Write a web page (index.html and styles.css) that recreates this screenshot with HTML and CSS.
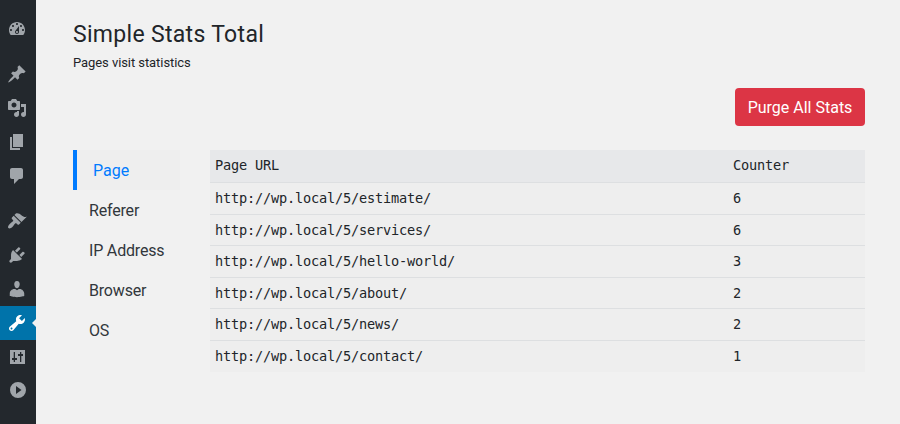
FILE: index.html
```html
<!DOCTYPE html>
<html lang="en">
<head>
<meta charset="utf-8">
<title>Simple Stats Total</title>
<link rel="stylesheet" href="styles.css">
</head>
<body>
<nav class="menu">
  <a class="item"><svg viewBox="0 0 20 20"><path d="M3.76 16h12.48c1.1-1.37 1.76-3.11 1.76-5 0-4.42-3.58-8-8-8s-8 3.58-8 8c0 1.89.66 3.63 1.76 5zM10 4c.55 0 1 .45 1 1s-.45 1-1 1-1-.45-1-1 .45-1 1-1zM6 6c.55 0 1 .45 1 1s-.45 1-1 1-1-.45-1-1 .45-1 1-1zm8 0c.55 0 1 .45 1 1s-.45 1-1 1-1-.45-1-1 .45-1 1-1zm-5.37 5.55L12 7v6c0 1.1-.9 2-2 2s-2-.9-2-2c0-.57.24-1.08.63-1.45zM4 10c.55 0 1 .45 1 1s-.45 1-1 1-1-.45-1-1 .45-1 1-1zm12 0c.55 0 1 .45 1 1s-.45 1-1 1-1-.45-1-1 .45-1 1-1zm-5 3c0-.55-.45-1-1-1s-1 .45-1 1 .45 1 1 1 1-.45 1-1z"/></svg></a>
  <a class="item group"><svg viewBox="0 0 20 20"><path d="M10.44 3.02l1.82-1.82 6.36 6.35-1.83 1.82c-1.05-.68-2.48-.57-3.41.36l-.75.75c-.92.93-1.04 2.35-.35 3.41l-1.83 1.82-2.41-2.41-2.8 2.79c-.42.42-3.38 2.71-3.8 2.29s1.86-3.39 2.28-3.81l2.79-2.79L4.1 9.36l1.83-1.82c1.05.69 2.48.57 3.4-.36l.75-.75c.93-.92 1.05-2.35.36-3.41z"/></svg></a>
  <a class="item"><svg viewBox="0 0 20 20"><path d="M13 11V4c0-.55-.45-1-1-1h-1.67L9 1H5L3.67 3H2c-.55 0-1 .45-1 1v7c0 .55.45 1 1 1h10c.55 0 1-.45 1-1zM7 4.5c1.38 0 2.5 1.12 2.5 2.5S8.38 9.5 7 9.5 4.5 8.38 4.5 7 5.62 4.5 7 4.5zM14 6h5v10.5c0 1.38-1.12 2.5-2.5 2.5S14 17.88 14 16.5s1.12-2.5 2.5-2.5c.17 0 .34.02.5.05V9h-3V6zm-4 8.05V13h2v3.5c0 1.38-1.12 2.5-2.5 2.5S7 17.88 7 16.5 8.12 14 9.5 14c.17 0 .34.02.5.05z"/></svg></a>
  <a class="item"><svg viewBox="0 0 20 20"><path d="M6 15V2h10v13H6zm-1 1h8v2H3V5h2v11z"/></svg></a>
  <a class="item"><svg viewBox="0 0 20 20"><path d="M5 2h9c1.1 0 2 .9 2 2v7c0 1.1-.9 2-2 2h-2l-5 5v-5H5c-1.1 0-2-.9-2-2V4c0-1.1.9-2 2-2z"/></svg></a>
  <a class="item group"><svg viewBox="0 0 20 20"><path d="M14.48 11.06L7.41 3.99l1.5-1.5c.5-.56 2.3-.47 3.51.32 1.21.8 1.43 1.28 2.91 2.1 1.18.64 2.45 1.26 4.45.85zm-.71.71L6.7 4.7 4.93 6.47c-.39.39-.39 1.02 0 1.41l1.06 1.06c.39.39.39 1.03 0 1.42-.6.6-1.43 1.11-2.21 1.69-.35.26-.7.53-1.01.84C1.43 14.23.4 16.08 1.4 17.07c.99 1 2.84-.03 4.18-1.36.31-.31.58-.66.85-1.02.57-.78 1.08-1.61 1.69-2.21.39-.39 1.02-.39 1.41 0l1.06 1.06c.39.39 1.02.39 1.41 0z"/></svg></a>
  <a class="item"><svg viewBox="0 0 20 20"><path d="M13.11 4.36L9.87 7.6 8 5.73l3.24-3.24c.35-.34 1.05-.2 1.56.32.52.51.66 1.21.31 1.55zm-8 1.77l.91-1.12 9.01 9.01-1.19.84c-.71.71-2.63 1.16-3.82 1.16H6.14L4.9 17.26c-.59.59-1.54.59-2.12 0-.59-.58-.59-1.53 0-2.12l1.24-1.24v-3.88c0-1.13.4-3.19 1.09-3.89zm7.26 3.97l3.24-3.24c.34-.35 1.04-.21 1.55.31.52.51.66 1.21.31 1.55l-3.24 3.25z"/></svg></a>
  <a class="item"><svg viewBox="0 0 20 20"><path d="M10 9.25c-2.27 0-2.73-3.44-2.73-3.44C7 4.02 7.82 2 9.97 2c2.16 0 2.98 2.02 2.71 3.81 0 0-.41 3.44-2.68 3.44zm0 1.9l1.800-1.150h.920c2.400 0 4.520 2.330 4.520 4.530v2.490s-3.650 1.130-7.240 1.130c-3.650 0-7.240-1.130-7.240-1.130v-2.490c0-2.250 1.940-4.480 4.470-4.480h1z"/></svg></a>
  <a class="item current"><svg viewBox="0 0 20 20"><path d="M16.68 9.77c-1.34 1.34-3.3 1.67-4.95.99l-5.41 6.52c-.99.99-2.59.99-3.58 0s-.99-2.59 0-3.57l6.52-5.42c-.68-1.65-.35-3.61.99-4.95 1.28-1.28 3.12-1.62 4.72-1.06l-2.89 2.89 2.82 2.82 2.86-2.87c.53 1.58.18 3.39-1.08 4.65zM3.81 16.21c.4.39 1.04.39 1.43 0 .4-.4.4-1.04 0-1.43-.39-.4-1.03-.4-1.43 0-.39.39-.39 1.03 0 1.43z"/></svg></a>
  <a class="item"><svg viewBox="0 0 20 20"><path fill-rule="evenodd" d="M3 3h15v14H3zM6.700 5v6H5v2h1.700v2h1.300v-2h2v-2H8V5zM13 5v2h-2v2h2v6h1.300V9H16V7h-1.700V5z"/></svg></a>
  <a class="item"><svg viewBox="0 0 20 20"><path fill-rule="evenodd" d="M11 1a8 8 0 1 0 0 16a8 8 0 1 0 0-16zM9 5l5.500 4L9 13z"/></svg></a>
</nav>
<main class="content">
  <h1 class="title">Simple Stats Total</h1>
  <p class="subtitle">Pages visit statistics</p>
  <div class="actions"><button class="purge">Purge All Stats</button></div>
  <div class="panel">
    <div class="tabs">
      <a class="tab active">Page</a>
      <a class="tab">Referer</a>
      <a class="tab">IP Address</a>
      <a class="tab">Browser</a>
      <a class="tab">OS</a>
    </div>
    <div class="table">
      <div class="row head"><span>Page URL</span><span>Counter</span></div>
      <div class="row"><span>http://wp.local/5/estimate/</span><span>6</span></div>
      <div class="row"><span>http://wp.local/5/services/</span><span>6</span></div>
      <div class="row"><span>http://wp.local/5/hello-world/</span><span>3</span></div>
      <div class="row"><span>http://wp.local/5/about/</span><span>2</span></div>
      <div class="row"><span>http://wp.local/5/news/</span><span>2</span></div>
      <div class="row"><span>http://wp.local/5/contact/</span><span>1</span></div>
    </div>
  </div>
</main>
</body>
</html>
```
FILE: styles.css
```css
* { box-sizing: border-box; }
body {
  margin: 0;
  height: 424px;
  display: flex;
  overflow: hidden;
  background: #f1f1f1;
  color: #212529;
  font-family: Roboto, sans-serif;
}
.menu { width: 36px; padding-top: 12px; background: #23282d; }
.item { position: relative; display: block; height: 34px; padding: 7px; color: #a0a5aa; }
.item svg { display: block; width: 20px; height: 20px; fill: currentColor; }
.group { margin-top: 11px; }
.current { background: #0073aa; color: #fff; }
.current::after {
  content: "";
  position: absolute;
  right: 0;
  top: 13px;
  border: 4px solid transparent;
  border-left-width: 0;
  border-right-color: #f1f1f1;
}
.content { flex: 1; padding: 21px 35px 0 37px; }
.title { margin: 0; font-size: 23px; font-weight: 400; line-height: 28px; letter-spacing: 0.31px; }
.subtitle { margin: 4px 0 0; font-size: 13px; line-height: 19px; letter-spacing: -0.07px; }
.actions { display: flex; justify-content: flex-end; margin: 16px 0 24px; }
.purge {
  width: 130px;
  height: 38px;
  padding: 1px 0 0;
  border: 0;
  border-radius: 4px;
  background: #dc3545;
  color: #fff;
  font: 16px/37px Roboto, sans-serif;
}
.panel { display: flex; gap: 30px; }
.tabs { width: 107px; }
.tab { display: block; height: 40px; padding: 1px 0 0 16px; font-size: 16px; line-height: 40px; letter-spacing: -0.18px; color: #32373c; white-space: nowrap; }
.active { border-left: 4px solid #007bff; background: #eee; color: #007bff; letter-spacing: 0; }
.table { flex: 1; font: 13.6px/18px "DejaVu Sans Mono", monospace; letter-spacing: -0.188px; }
.row {
  display: grid;
  grid-template-columns: 518px 1fr;
  height: 31.6px;
  padding: 6px 5px 0;
  border-top: 1px solid #dddfe1;
  background: #eee;
}
.head { height: 32px; border-top: 0; background: #e7e8ea; }
```
